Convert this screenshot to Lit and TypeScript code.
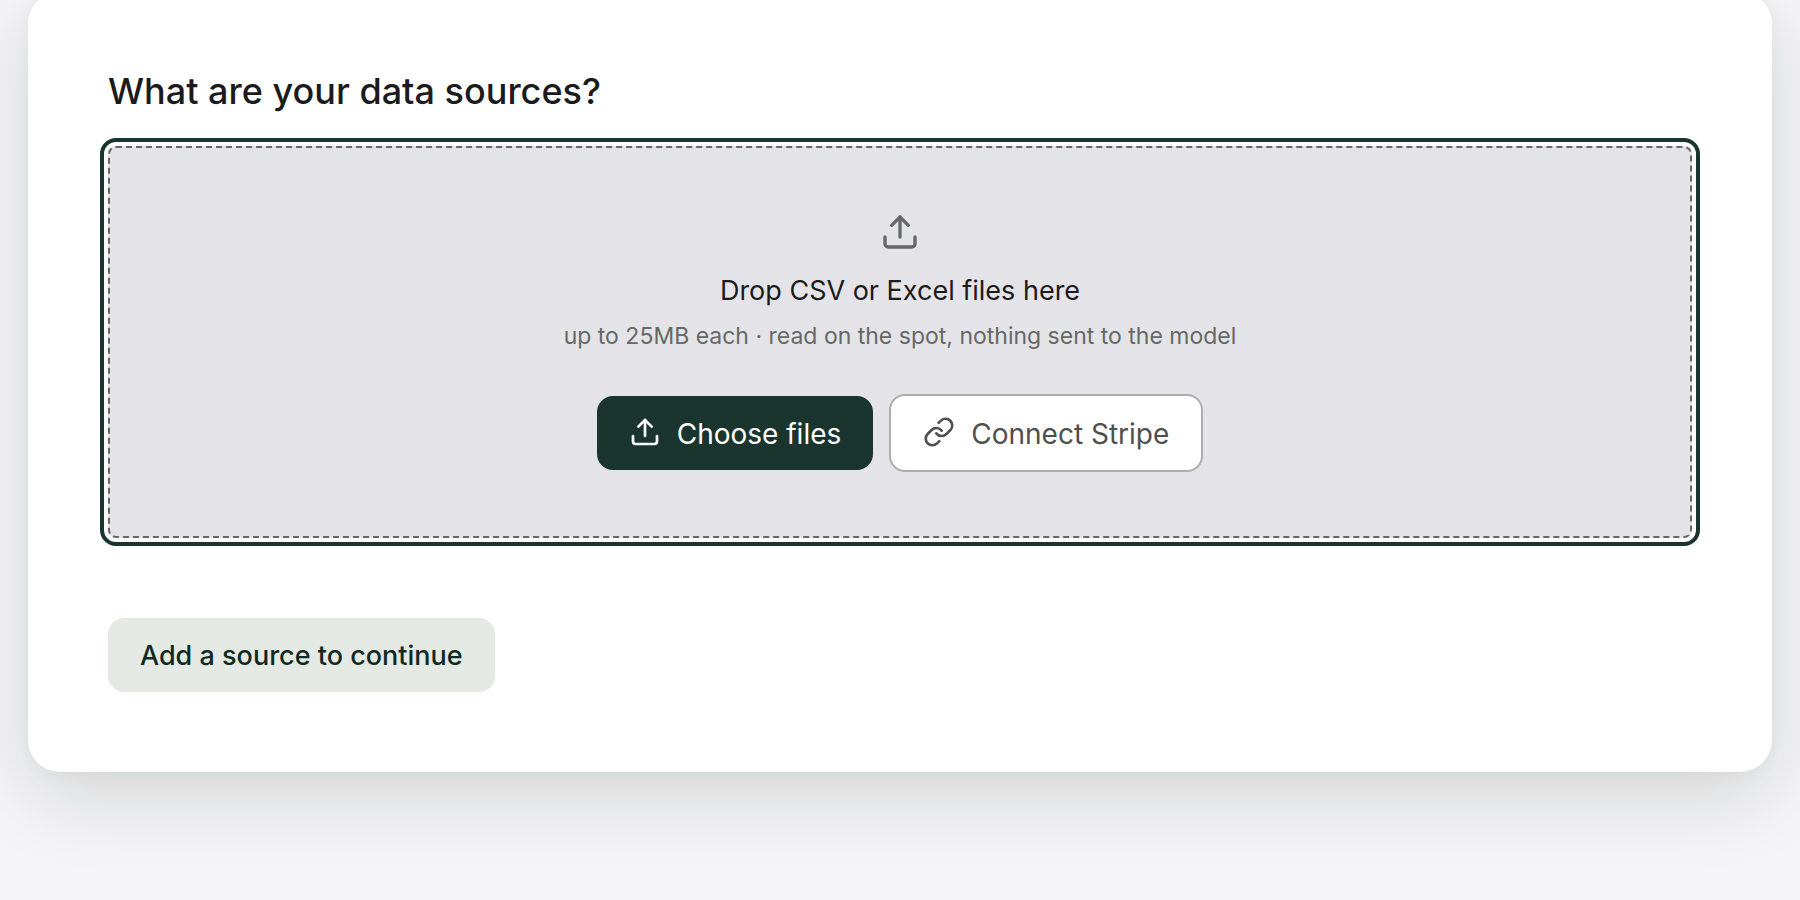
import { LitElement, html, css, svg } from "lit";
import { customElement } from "lit/decorators.js";

const uploadPaths = svg`
  <path d="M21 15v4a2 2 0 0 1-2 2H5a2 2 0 0 1-2-2v-4" />
  <path d="M17 8l-5-5-5 5" />
  <path d="M12 3v12" />
`;

const linkPaths = svg`
  <path d="M10 13a5 5 0 0 0 7.54.54l3-3a5 5 0 0 0-7.07-7.07l-1.72 1.71" />
  <path d="M14 11a5 5 0 0 0-7.54-.54l-3 3a5 5 0 0 0 7.07 7.07l1.71-1.71" />
`;

const icon = (paths: unknown, className: string) => html`
  <svg class=${className} viewBox="0 0 24 24" aria-hidden="true">${paths}</svg>
`;

@customElement("app-root")
export class AppRoot extends LitElement {
  static styles = css`
    :host {
      display: block;
      box-sizing: border-box;
      min-height: 100vh;
      padding: 0 28px 128px;
      overflow: hidden;
      background: #f5f5f7;
      color: #1a1b1a;
      font-family: Inter, "Liberation Sans", sans-serif;
    }

    .card {
      margin-top: -8px;
      padding: 80px;
      border-radius: 32px;
      background: #fff;
      box-shadow:
        0 24px 80px rgba(16, 20, 0, 0.14),
        0 4px 16px rgba(16, 20, 0, 0.03);
    }

    .title {
      margin: 0 0 36px;
      font-size: 36px;
      font-weight: 500;
      line-height: 38px;
    }

    .dropzone {
      display: flex;
      flex-direction: column;
      align-items: center;
      padding: 64px;
      border: 2px dashed #646866;
      border-radius: 8px;
      outline: 4px solid #1a352d;
      outline-offset: 4px;
      background: #e4e4e8;
    }

    .icon,
    .icon-large {
      flex: none;
      width: 32px;
      height: 32px;
      fill: none;
      stroke: currentColor;
      stroke-width: 2;
      stroke-linecap: round;
      stroke-linejoin: round;
    }

    .icon {
      margin-top: 3px;
    }

    .icon-large {
      width: 40px;
      height: 40px;
      color: #646866;
    }

    .prompt {
      margin: 18px 0 6px;
      font-size: 27px;
      line-height: 42px;
    }

    .hint {
      margin: 0 0 40px;
      color: #646866;
      font-size: 23px;
      line-height: 36px;
    }

    .actions {
      display: flex;
      flex-wrap: wrap;
      align-items: center;
      justify-content: center;
      gap: 16px;
    }

    .button {
      display: inline-flex;
      align-items: flex-start;
      gap: 16px;
      margin: 0;
      padding: 17px 32px 15px;
      border: 0;
      border-radius: 16px;
      font-family: inherit;
      font-size: 28px;
      font-weight: 400;
      line-height: 42px;
      cursor: pointer;
    }

    .primary {
      background: #1a352d;
      color: #fff;
    }

    .secondary {
      border: 2px solid #adadae;
      background: #fff;
      color: #4d504e;
    }

    .continue {
      margin-top: 80px;
      background: #e4eae3;
      color: #0f2a22;
      font-size: 27px;
      font-weight: 500;
    }
  `;

  render() {
    return html`
      <main class="card">
        <h1 class="title" id="sources-title">What are your data sources?</h1>
        <section class="dropzone" aria-labelledby="sources-title">
          ${icon(uploadPaths, "icon-large")}
          <p class="prompt">Drop CSV or Excel files here</p>
          <p class="hint">up to 25MB each · read on the spot, nothing sent to the model</p>
          <div class="actions">
            <button class="button primary" type="button">
              ${icon(uploadPaths, "icon")}<span>Choose files</span>
            </button>
            <button class="button secondary" type="button">
              ${icon(linkPaths, "icon")}<span>Connect Stripe</span>
            </button>
          </div>
        </section>
        <button class="button continue" type="button">Add a source to continue</button>
      </main>
    `;
  }
}
